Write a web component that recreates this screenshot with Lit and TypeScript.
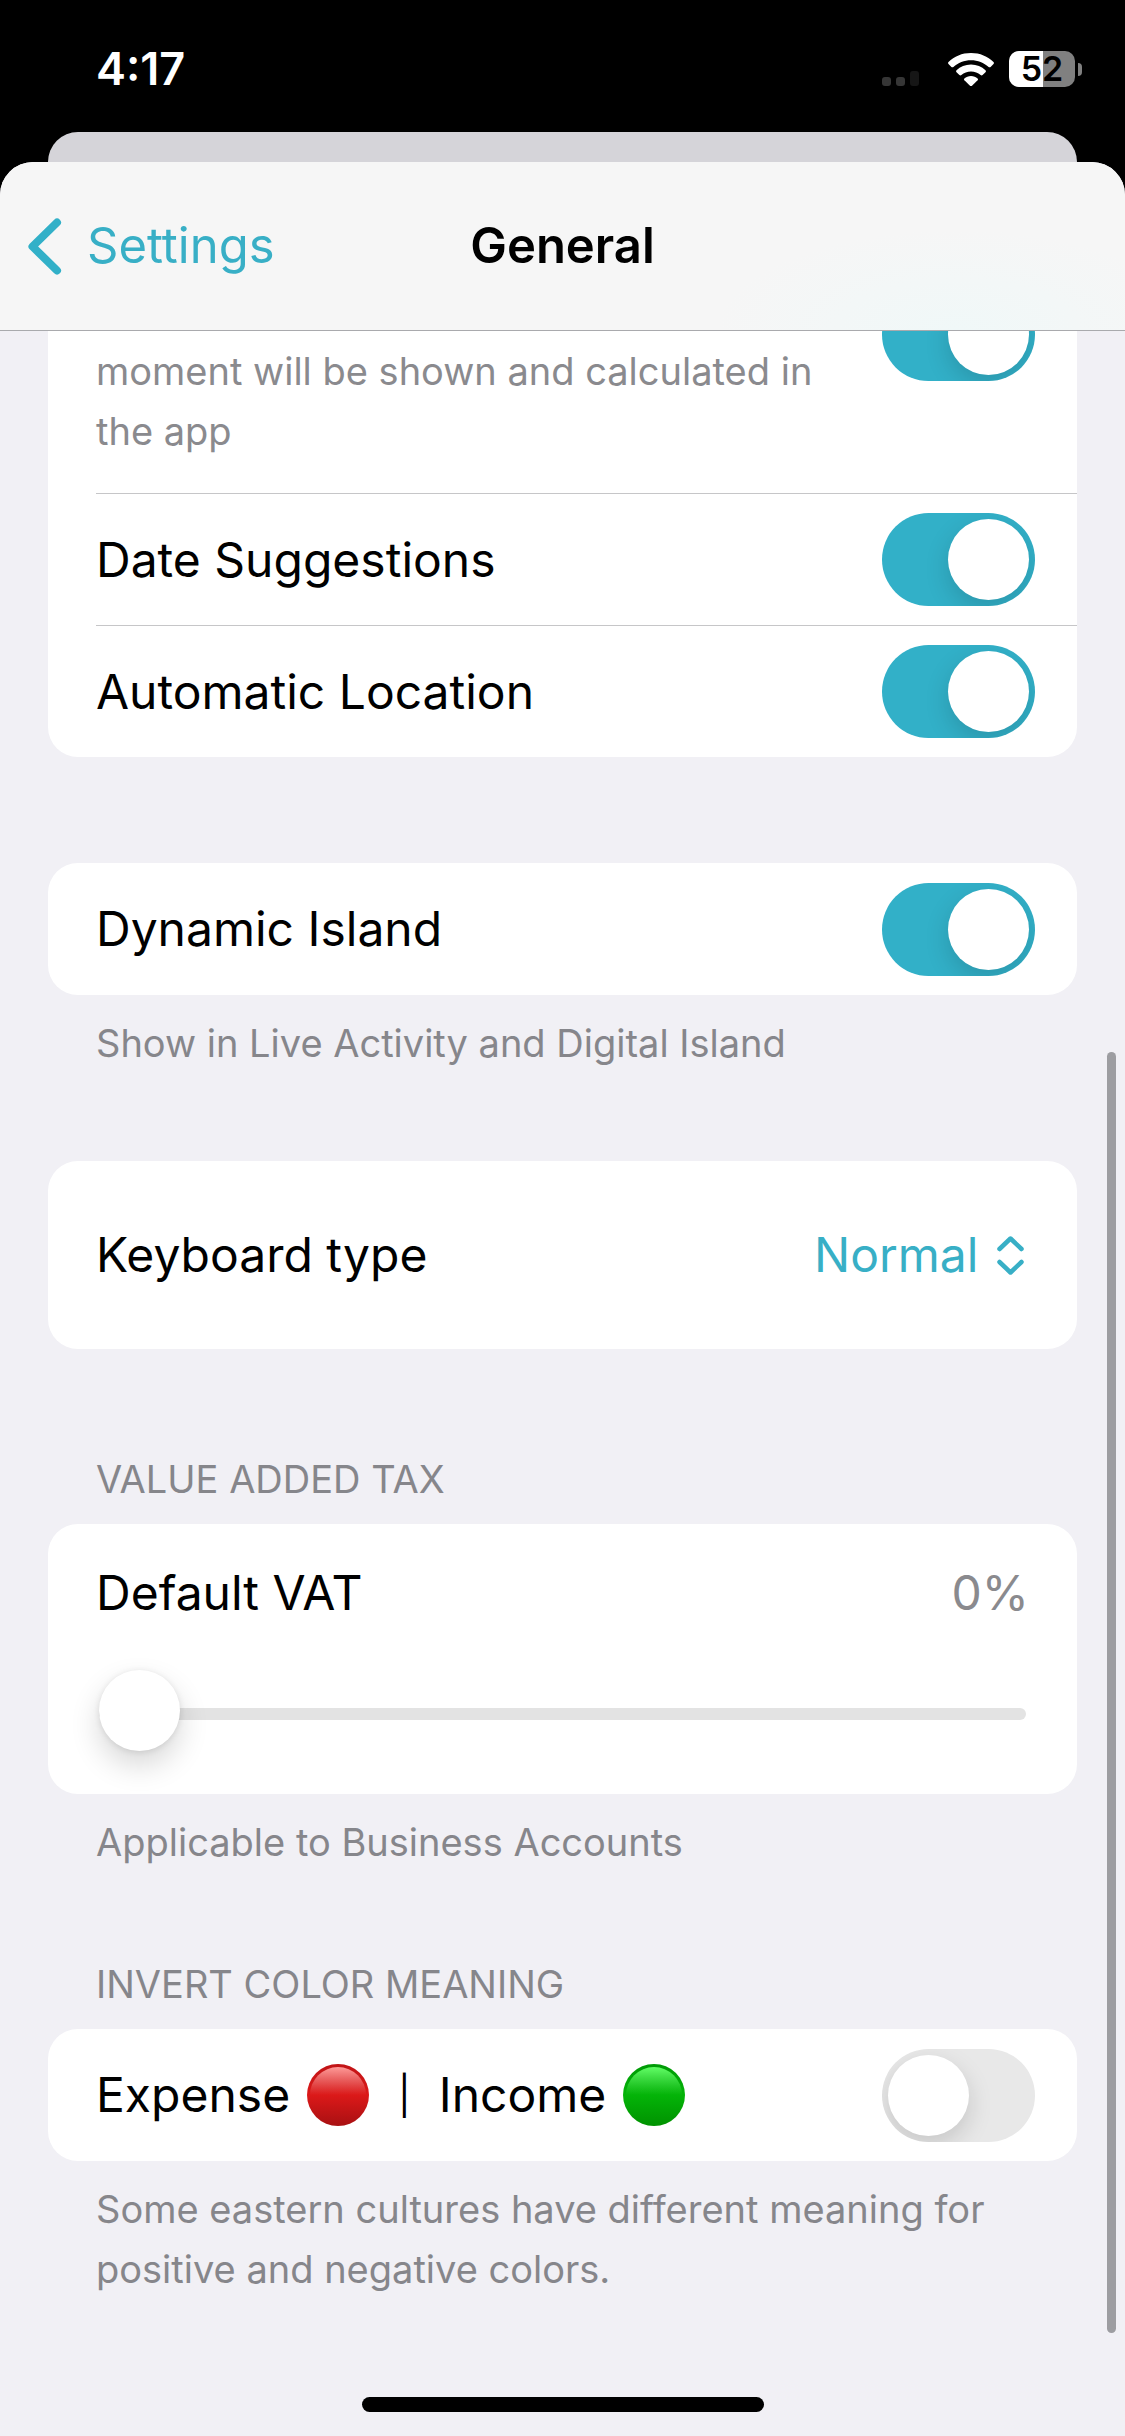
import { LitElement, html, css, svg, nothing } from "lit";
import { customElement, property, state } from "lit/decorators.js";

@customElement("status-bar")
class StatusBar extends LitElement {
  @property() time = "";
  @property({ type: Number }) battery = 100;

  static styles = css`
    :host {
      display: flex;
      align-items: center;
      justify-content: space-between;
      height: 132px;
      padding: 6px 43px 0 96px;
      box-sizing: border-box;
      color: #fff;
    }
    .time {
      font-size: 45px;
      line-height: 54px;
      font-weight: 600;
    }
    .icons {
      display: flex;
      align-items: center;
    }
    .signal {
      width: 37px;
      height: 33px;
      margin-right: 29px;
    }
    .wifi {
      width: 46px;
      height: 33px;
      margin-right: 15px;
    }
    .battery {
      display: flex;
      align-items: center;
      gap: 3px;
    }
    .cell {
      position: relative;
      width: 66px;
      height: 36px;
      border-radius: 10px;
      background: #808080;
      color: #000;
      font-size: 34px;
      line-height: 36px;
      font-weight: 600;
      text-align: center;
    }
    .charge {
      position: absolute;
      inset: 0 auto 0 0;
      border-radius: 10px 0 0 10px;
      background: #fff;
    }
    .level {
      position: relative;
    }
    .tip {
      width: 4px;
      height: 13px;
      border-radius: 0 4px 4px 0;
      background: #808080;
    }
  `;

  render() {
    return html`
      <span class="time">${this.time}</span>
      <div class="icons">
        <svg class="signal" viewBox="0 0 37 33" aria-hidden="true">
          <rect x="0" y="24" width="9" height="9" rx="3" fill="#363636" />
          <rect x="14" y="24" width="9" height="9" rx="3" fill="#363636" />
          <rect x="28" y="18" width="9" height="15" rx="3" fill="#161616" />
        </svg>
        <svg class="wifi" viewBox="0 0 46 33" fill="#fff" aria-hidden="true">
          <path d="M23 0C32 0 39.800 3.400 45.500 9Q46.400 10 45.500 11L42.600 13.900Q41.600 14.800 40.600 13.900C36 9.700 29.800 7.200 23 7.200S10 9.700 5.400 13.900Q4.400 14.800 3.400 13.900L0.500 11Q-0.400 10 0.500 9C6.200 3.400 14 0 23 0Z" />
          <path d="M23 11.500C28.700 11.500 33.700 13.700 37.500 17.200Q38.500 18.200 37.500 19.200L34.600 22.100Q33.600 23 32.600 22.100C30 19.900 26.700 18.600 23 18.600S16 19.900 13.400 22.100Q12.400 23 11.400 22.100L8.500 19.200Q7.500 18.200 8.500 17.200C12.300 13.700 17.300 11.500 23 11.500Z" />
          <path d="M23 23C25.600 23 27.900 23.900 29.600 25.400Q30.500 26.300 29.600 27.200L24 32.700Q23 33.500 22 32.700L16.400 27.200Q15.500 26.300 16.400 25.400C18.100 23.900 20.400 23 23 23Z" />
        </svg>
        <div class="battery">
          <div class="cell">
            <div class="charge" style="width:${this.battery}%"></div>
            <span class="level">${this.battery}</span>
          </div>
          <div class="tip"></div>
        </div>
      </div>
    `;
  }
}

@customElement("settings-section")
class SettingsSection extends LitElement {
  @property() heading = "";
  @property() footer = "";

  static styles = css`
    :host {
      display: block;
    }
    :host(:not([footer])) {
      padding-bottom: 18px;
    }
    .heading,
    .footer {
      margin: 0;
      padding: 0 48px;
      font-size: 38px;
      font-weight: 400;
      color: #86868b;
    }
    .heading {
      line-height: 48px;
      margin-bottom: 21px;
      text-transform: uppercase;
    }
    .footer {
      line-height: 60px;
      margin-top: 18px;
    }
    .card {
      background: #fff;
      border-radius: 30px;
      overflow: hidden;
    }
  `;

  render() {
    return html`
      ${this.heading ? html`<h2 class="heading">${this.heading}</h2>` : nothing}
      <div class="card"><slot></slot></div>
      ${this.footer ? html`<p class="footer">${this.footer}</p>` : nothing}
    `;
  }
}

const ball = (id: string, rim: string, top: string, mid: string, low: string) => html`
  <svg class="ball" viewBox="0 0 62 62" aria-hidden="true">
    ${svg`
      <defs>
        <linearGradient id="${id}-body" x1="0" y1="0" x2="0" y2="1">
          <stop offset="0" stop-color="${rim}" />
          <stop offset="0.5" stop-color="${mid}" />
          <stop offset="1" stop-color="${low}" />
        </linearGradient>
        <linearGradient id="${id}-gloss" x1="0" y1="0" x2="0" y2="1">
          <stop offset="0" stop-color="${top}" />
          <stop offset="0.5" stop-color="${top}" stop-opacity="0" />
        </linearGradient>
      </defs>
      <circle cx="31" cy="31" r="31" fill="url(#${id}-body)" />
      <circle cx="31" cy="31" r="28" fill="url(#${id}-gloss)" />
    `}
  </svg>
`;

@customElement("app-root")
class AppRoot extends LitElement {
  @state() private vat = 0;

  static styles = css`
    :host {
      display: flex;
      flex-direction: column;
      min-height: 100vh;
      background: #000;
      color: #000;
      font-family: Inter, "Liberation Sans", sans-serif;
    }
    .back-sheet {
      height: 60px;
      margin: 0 48px -30px;
      border-radius: 30px 30px 0 0;
      background: #d5d4d9;
    }
    .sheet {
      position: relative;
      flex: 1;
      display: flex;
      flex-direction: column;
      border-radius: 33px 33px 0 0;
      overflow: hidden;
      background: #f1f0f5;
    }
    .nav {
      position: relative;
      display: grid;
      grid-template-columns: 1fr auto 1fr;
      align-items: center;
      height: 169px;
      box-sizing: border-box;
      padding: 0 28px;
      border-bottom: 1px solid #a9aaad;
      background: radial-gradient(ellipse 240px 100px at 85% 100%, #f0f8f8, #f6f6f6);
    }
    .back {
      display: flex;
      align-items: center;
      justify-self: start;
      gap: 25px;
      color: #38afc6;
      font-size: 49px;
      line-height: 60px;
      text-decoration: none;
    }
    .chevron {
      width: 34px;
      height: 57px;
    }
    .title {
      margin: 0;
      font-size: 49px;
      line-height: 60px;
      font-weight: 600;
    }
    .viewport {
      overflow: hidden;
    }
    .content {
      display: flex;
      flex-direction: column;
      gap: 88px;
      margin-top: -155px;
      padding: 0 48px;
    }
    .row {
      display: flex;
      align-items: center;
      justify-content: space-between;
      box-sizing: border-box;
      min-height: 132px;
      margin-left: 48px;
      padding-right: 42px;
      font-size: 48px;
      line-height: 60px;
    }
    .row + .row {
      border-top: 1px solid #c6c6c8;
    }
    .detail {
      min-height: 317px;
      font-size: 38px;
      color: #8a8a8e;
    }
    .detail .label {
      align-self: flex-end;
      max-width: 740px;
      padding-bottom: 32px;
    }
    .tall {
      min-height: 188px;
      padding-right: 53px;
    }
    .label {
      display: flex;
      align-items: center;
    }
    .ball {
      width: 62px;
      height: 62px;
      margin: 0 29px 0 17px;
    }
    .bar {
      margin-right: 28px;
      font-size: 38px;
    }
    .toggle {
      appearance: none;
      flex: none;
      width: 153px;
      height: 93px;
      margin: 0;
      padding: 6px;
      box-sizing: border-box;
      border-radius: 47px;
      overflow: hidden;
      background: #e8e8e8;
    }
    .toggle::before {
      content: "";
      display: block;
      width: 81px;
      height: 81px;
      border-radius: 50%;
      background: #fff;
      box-shadow: 0 9px 24px rgba(0, 0, 0, 0.15);
    }
    .toggle:checked {
      background: #32b0c8;
    }
    .toggle:checked::before {
      margin-left: 60px;
    }
    .picker {
      display: flex;
      align-items: center;
      gap: 18px;
      color: #38afc6;
    }
    .select {
      appearance: none;
      margin: 0;
      padding: 0;
      border: 0;
      background: none;
      color: inherit;
      font: inherit;
    }
    .updown {
      width: 27px;
      height: 39px;
    }
    .vat {
      padding: 39px 48px 34px;
    }
    .vat-top {
      display: flex;
      justify-content: space-between;
      margin-bottom: 44px;
      font-size: 48px;
      line-height: 60px;
    }
    .value {
      color: #8a8a8e;
    }
    .slider {
      appearance: none;
      display: block;
      width: 100%;
      height: 93px;
      margin: 0;
      padding: 0 3px;
      box-sizing: border-box;
      background: none;
    }
    .slider::-webkit-slider-runnable-track {
      height: 12px;
      border-radius: 6px;
      background: #e3e3e3;
    }
    .slider::-webkit-slider-thumb {
      appearance: none;
      width: 81px;
      height: 81px;
      margin-top: -38px;
      border-radius: 50%;
      background: #fff;
      box-shadow: 0 1px 6px rgba(0, 0, 0, 0.1), 0 14px 30px rgba(0, 0, 0, 0.16);
    }
    .scrollbar {
      position: absolute;
      top: 890px;
      right: 9px;
      bottom: 103px;
      width: 9px;
      border-radius: 5px;
      background: #9d9da1;
    }
    .home {
      width: 402px;
      height: 15px;
      margin: auto auto 24px;
      border-radius: 8px;
      background: #000;
    }
  `;

  private toggleRow(id: string, label: string, extra = "") {
    return html`
      <div class="row ${extra}">
        <label class="label" for=${id}>${label}</label>
        <input class="toggle" id=${id} type="checkbox" role="switch" checked />
      </div>
    `;
  }

  render() {
    return html`
      <status-bar time="4:17" battery="52"></status-bar>
      <div class="back-sheet"></div>
      <main class="sheet">
        <header class="nav">
          <a class="back" href="#settings">
            <svg class="chevron" viewBox="0 0 34 57" fill="none" stroke="#32b0c8" stroke-width="8" stroke-linecap="round" stroke-linejoin="round" aria-hidden="true">
              <path d="M29 4.500 4.500 28.500 29 52.500" />
            </svg>
            <span>Settings</span>
          </a>
          <h1 class="title">General</h1>
        </header>

        <div class="viewport">
          <div class="content">
            <settings-section>
              ${this.toggleRow("future", "moment will be shown and calculated in the app", "detail")}
              ${this.toggleRow("dates", "Date Suggestions")}
              ${this.toggleRow("location", "Automatic Location")}
            </settings-section>

            <settings-section footer="Show in Live Activity and Digital Island">
              ${this.toggleRow("island", "Dynamic Island")}
            </settings-section>

            <settings-section>
              <div class="row tall">
                <label class="label" for="keyboard">Keyboard type</label>
                <div class="picker">
                  <select class="select" id="keyboard">
                    <option>Normal</option>
                  </select>
                  <svg class="updown" viewBox="0 0 27 39" fill="none" stroke="currentColor" stroke-width="4.500" stroke-linecap="round" stroke-linejoin="round" aria-hidden="true">
                    <path d="M2.500 13 13.500 2.500 24.500 13M2.500 26 13.500 36.500 24.500 26" />
                  </svg>
                </div>
              </div>
            </settings-section>

            <settings-section heading="Value added tax" footer="Applicable to Business Accounts">
              <div class="vat">
                <div class="vat-top">
                  <label for="vat">Default VAT</label>
                  <output class="value" for="vat">${this.vat}%</output>
                </div>
                <input
                  class="slider"
                  id="vat"
                  type="range"
                  min="0"
                  max="100"
                  .value=${String(this.vat)}
                  @input=${(e: Event) => (this.vat = Number((e.target as HTMLInputElement).value))}
                />
              </div>
            </settings-section>

            <settings-section
              heading="Invert color meaning"
              footer="Some eastern cultures have different meaning for positive and negative colors."
            >
              <div class="row">
                <label class="label" for="invert">
                  <span>Expense</span>
                  ${ball("expense", "#c01416", "#ff9a98", "#dc1919", "#a81012")}
                  <span class="bar">|</span>
                  <span>Income</span>
                  ${ball("income", "#009a06", "#62ff66", "#04b408", "#009200")}
                </label>
                <input class="toggle" id="invert" type="checkbox" role="switch" />
              </div>
            </settings-section>
          </div>
        </div>
        <div class="scrollbar"></div>
        <div class="home"></div>
      </main>
    `;
  }
}
